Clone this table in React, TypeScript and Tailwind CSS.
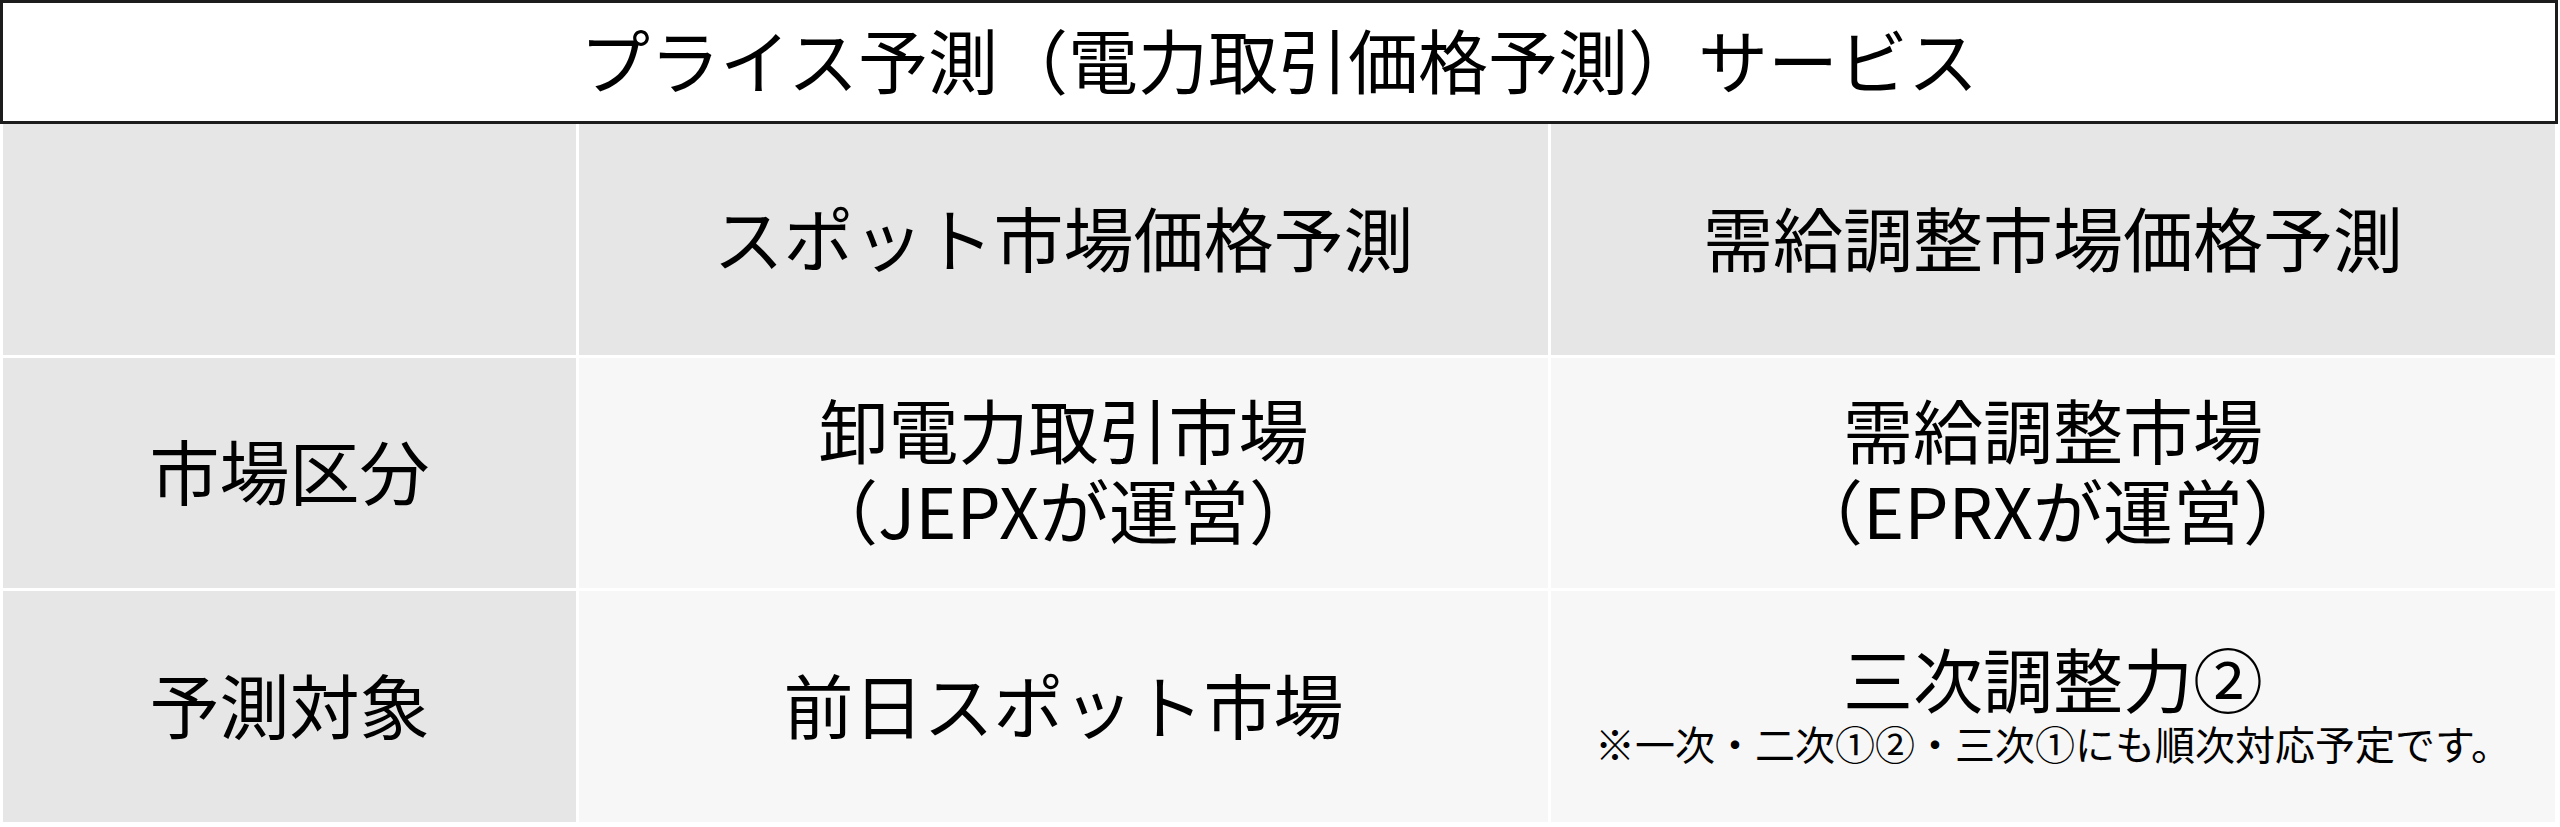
import React from "react";

const cellBase = "flex flex-col items-center justify-center text-center text-black";

export default function App() {
  return (
    <div
      className="w-[2560px] h-[827px] bg-white overflow-hidden"
      style={{ fontFamily: '"Noto Sans CJK JP", "Noto Sans", sans-serif' }}
    >
      <div className="w-[2558px] h-[124px] border-[3px] border-[#1c1c1c] flex items-center justify-center pb-[6px]">
        <span className="text-[70px] leading-none text-black">
          プライス予測（電力取引価格予測）サービス
        </span>
      </div>
      <div className="grid grid-cols-[573px_969px_1004px] grid-rows-[231px_230px_231px] gap-[3px] pl-[3px] w-[2555px]">
        <div className="bg-[#e6e6e6]"></div>
        <div className={`${cellBase} bg-[#e6e6e6] text-[70px] leading-[80px] pb-[6px]`}>
          スポット市場価格予測
        </div>
        <div className={`${cellBase} bg-[#e6e6e6] text-[70px] leading-[80px] pb-[6px]`}>
          需給調整市場価格予測
        </div>

        <div className={`${cellBase} bg-[#e6e6e6] text-[70px] leading-[80px] pb-[6px]`}>
          市場区分
        </div>
        <div className={`${cellBase} bg-[#f7f7f7] text-[70px] leading-[80px] pb-[8px]`}>
          <div>卸電力取引市場</div>
          <div>（JEPXが運営）</div>
        </div>
        <div className={`${cellBase} bg-[#f7f7f7] text-[70px] leading-[80px] pb-[8px]`}>
          <div>需給調整市場</div>
          <div>（EPRXが運営）</div>
        </div>

        <div className={`${cellBase} bg-[#e6e6e6] text-[70px] leading-[80px] pb-[6px]`}>
          予測対象
        </div>
        <div className={`${cellBase} bg-[#f7f7f7] text-[70px] leading-[80px] pb-[6px]`}>
          前日スポット市場
        </div>
        <div className={`${cellBase} bg-[#f7f7f7] pb-[8px]`}>
          <div className="text-[70px] leading-[80px]">三次調整力②</div>
          <div className="text-[40px] leading-[50px]">
            ※一次・二次①②・三次①にも順次対応予定です。
          </div>
        </div>
      </div>
    </div>
  );
}
